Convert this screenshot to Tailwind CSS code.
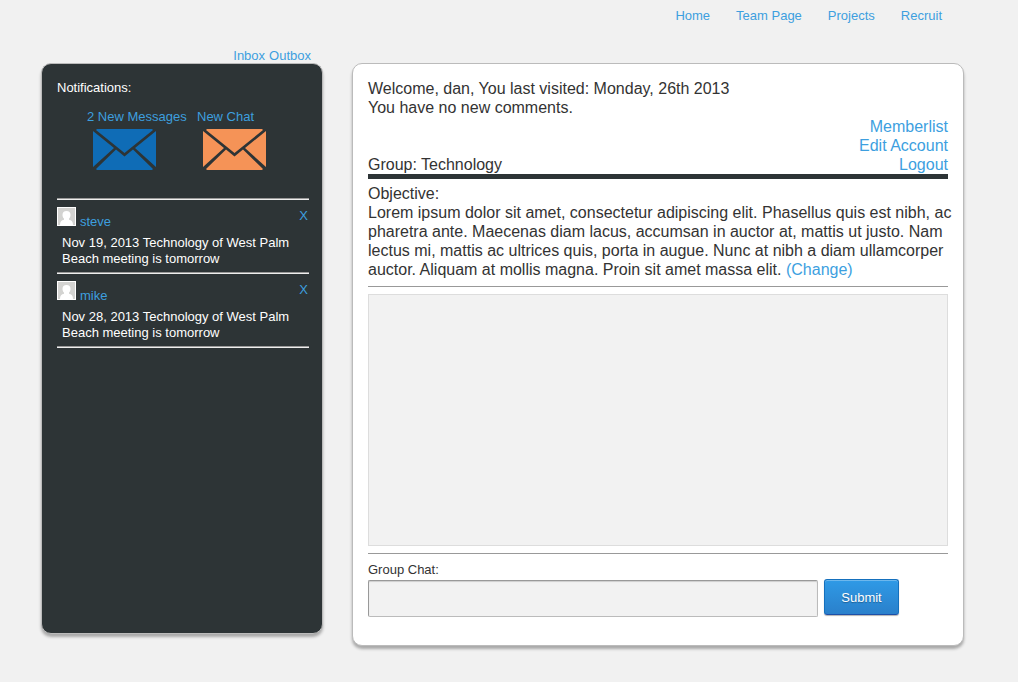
<!DOCTYPE html>
<html lang="en">
<head>
  <meta charset="UTF-8">
  <meta name="viewport" content="width=device-width, initial-scale=1.0">
  <title>Group: Technology</title>
  <script src="https://cdn.jsdelivr.net/npm/@tailwindcss/browser@4"></script>
</head>
<body class="min-h-screen bg-[#f1f1f1] font-['Liberation_Sans',Arial,sans-serif] text-[13px] leading-4 text-[#333333]">
  <!-- Top navigation -->
  <nav class="flex justify-end gap-[26px] pt-2 pr-[76px] text-[#3d9fdf]">
    <a href="#">Home</a>
    <a href="#">Team Page</a>
    <a href="#">Projects</a>
    <a href="#">Recruit</a>
  </nav>

  <div class="mt-6 flex items-start gap-[29px] pr-[54px] pb-8 pl-[41px]">
    <!-- Sidebar -->
    <aside class="w-[282px] shrink-0">
      <div class="flex justify-end gap-1 pr-3 leading-[15px] text-[#3d9fdf]">
        <a href="#">Inbox</a>
        <a href="#">Outbox</a>
      </div>
      <div class="min-h-[571px] rounded-[10px] border border-[#bbbbbb] bg-[#2d3436] pt-4 pr-[13px] pb-4 pl-[15px] text-white shadow-[0_3px_3px_rgba(0,0,0,0.3)]">
        <h2>Notifications:</h2>

        <div class="mt-[13px] flex pl-[30px] text-[#3d9fdf]">
          <a href="#" class="w-[110px]">
            2 New Messages
            <svg class="mt-1 ml-[6px]" width="63" height="41" viewBox="0 0 63 41">
              <path d="M4 0H59L60 1L31.500 24L3 1zM0 2L21 19L0 38zM63 2L42 19L63 38zM23 20.500L31.500 27.500L40 20.500L60 40L59 41H4L3 40z" fill="#0f6cb6"/>
            </svg>
          </a>
          <a href="#">
            New Chat
            <svg class="mt-1 ml-[6px]" width="63" height="41" viewBox="0 0 63 41">
              <path d="M4 0H59L60 1L31.500 24L3 1zM0 2L21 19L0 38zM63 2L42 19L63 38zM23 20.500L31.500 27.500L40 20.500L60 40L59 41H4L3 40z" fill="#f59357"/>
            </svg>
          </a>
        </div>

        <!-- Notification list -->
        <hr class="mt-7 border-t border-b border-t-[#999999] border-b-[#eeeeee]">
        <ul>
          <li>
            <div class="flex items-start gap-1 pt-[7px]">
              <svg width="19" height="19" viewBox="0 0 19 19">
                <rect width="19" height="19" fill="#fff"/>
                <rect x="1" y="1" width="17" height="17" fill="#d3d3d1"/>
                <path d="M9.500 4a4 4 0 0 1 4 4c0 1.500-.6 2.800-1.500 3.600v1.200c2.500.6 4 1.800 4 5.200H3c0-3.400 1.500-4.600 4-5.200v-1.200C6.100 10.800 5.500 9.500 5.500 8a4 4 0 0 1 4-4z" fill="#fff"/>
              </svg>
              <a href="#" class="mt-[7px] text-[#3d9fdf]">steve</a>
              <button type="button" aria-label="Dismiss" class="mt-px mr-px ml-auto cursor-pointer text-[#3d9fdf]">X</button>
            </div>
            <p class="mt-[5px] pl-[5px]">Nov 19, 2013 Technology of West Palm Beach meeting is tomorrow</p>
            <hr class="mt-[5px] border-t border-b border-t-[#999999] border-b-[#eeeeee]">
          </li>
          <li>
            <div class="flex items-start gap-1 pt-[7px]">
              <svg width="19" height="19" viewBox="0 0 19 19">
                <rect width="19" height="19" fill="#fff"/>
                <rect x="1" y="1" width="17" height="17" fill="#d3d3d1"/>
                <path d="M9.500 4a4 4 0 0 1 4 4c0 1.500-.6 2.800-1.500 3.600v1.200c2.500.6 4 1.800 4 5.200H3c0-3.400 1.500-4.600 4-5.200v-1.200C6.100 10.800 5.500 9.500 5.500 8a4 4 0 0 1 4-4z" fill="#fff"/>
              </svg>
              <a href="#" class="mt-[7px] text-[#3d9fdf]">mike</a>
              <button type="button" aria-label="Dismiss" class="mt-px mr-px ml-auto cursor-pointer text-[#3d9fdf]">X</button>
            </div>
            <p class="mt-[5px] pl-[5px]">Nov 28, 2013 Technology of West Palm Beach meeting is tomorrow</p>
            <hr class="mt-[5px] border-t border-b border-t-[#999999] border-b-[#eeeeee]">
          </li>
        </ul>
      </div>
    </aside>

    <!-- Main panel -->
    <main class="mt-[15px] min-w-0 flex-1 rounded-[10px] border border-[#bbbbbb] bg-white px-[15px] pt-[15px] pb-7 shadow-[0_3px_3px_rgba(0,0,0,0.3)]">
      <div class="text-[16px] leading-[19px]">
        <p>Welcome, dan, You last visited: Monday, 26th 2013</p>
        <p>You have no new comments.</p>
        <div class="flex items-end justify-between border-b-5 border-[#2d3436]">
          <h1>Group: Technology</h1>
          <div class="flex flex-col items-end text-[#3d9fdf]">
            <a href="#">Memberlist</a>
            <a href="#">Edit Account</a>
            <a href="#">Logout</a>
          </div>
        </div>
        <h2 class="mt-[5px]">Objective:</h2>
        <p class="-mr-2">Lorem ipsum dolor sit amet, consectetur adipiscing elit. Phasellus quis est nibh, ac pharetra ante. Maecenas diam lacus, accumsan in auctor at, mattis ut justo. Nam lectus mi, mattis ac ultrices quis, porta in augue. Nunc at nibh a diam ullamcorper auctor. Aliquam at mollis magna. Proin sit amet massa elit. <a href="#" class="text-[#3d9fdf]">(Change)</a></p>
      </div>

      <hr class="mt-[7px] border-[#999999]">
      <div class="mt-[7px] h-[252px] border border-[#dddddd] bg-[#f2f2f2]"></div>
      <hr class="mt-[7px] border-[#999999]">

      <form class="mt-2">
        <label for="chat">Group Chat:</label>
        <div class="mt-px flex items-start gap-[6px]">
          <input id="chat" type="text" class="mt-px h-[37px] w-[450px] rounded-[2px] border border-[#bbbbbb] border-t-[#999999] border-l-[#999999] bg-[#f2f2f2] px-2 shadow-[inset_0_1px_1px_rgba(0,0,0,0.15)]">
          <button type="button" class="h-9 w-[75px] cursor-pointer rounded-[3px] border border-[#1570bd] border-b-[#1d4fa8] bg-linear-to-b from-[#2f9ae6] to-[#2a80cb] pt-px text-white shadow-[inset_0_1px_0_rgba(255,255,255,0.3),0_1px_1px_rgba(0,0,0,0.3)] text-shadow-[0_1px_1px_rgba(0,0,0,0.3)]">Submit</button>
        </div>
      </form>
    </main>
  </div>
</body>
</html>
